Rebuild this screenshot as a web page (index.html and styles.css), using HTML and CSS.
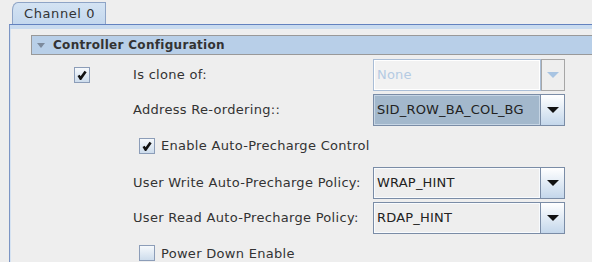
FILE: index.html
```html
<!DOCTYPE html>
<html lang="en">
<head>
    <meta charset="UTF-8">
    <meta name="viewport" content="width=device-width, initial-scale=1.0">
    <title>Channel 0</title>
    <link rel="stylesheet" href="styles.css">
</head>
<body>

    <div class="tabs">
        <!-- Pestañas -->
        <div class="tab-strip">
            <div class="tab">Channel 0</div>
        </div>

        <div class="tab-body">
            <div class="section-head">
                <span class="caret"></span>
                <span>Controller Configuration</span>
            </div>

            <div class="form">
                <div class="row">
                    <span class="check-cell"><span class="checkbox checked"></span></span>
                    <label class="label">Is clone of:</label>
                    <div class="combo disabled">
                        <span class="combo-value">None</span>
                        <span class="combo-button"><span class="arrow"></span></span>
                    </div>
                </div>

                <div class="row">
                    <span class="check-cell"></span>
                    <label class="label">Address Re-ordering::</label>
                    <div class="combo focused">
                        <span class="combo-value">SID_ROW_BA_COL_BG</span>
                        <span class="combo-button"><span class="arrow"></span></span>
                    </div>
                </div>

                <div class="row check-row">
                    <span class="checkbox checked"></span>
                    <label class="check-label">Enable Auto-Precharge Control</label>
                </div>

                <div class="row">
                    <span class="check-cell"></span>
                    <label class="label">User Write Auto-Precharge Policy:</label>
                    <div class="combo">
                        <span class="combo-value">WRAP_HINT</span>
                        <span class="combo-button"><span class="arrow"></span></span>
                    </div>
                </div>

                <div class="row">
                    <span class="check-cell"></span>
                    <label class="label">User Read Auto-Precharge Policy:</label>
                    <div class="combo">
                        <span class="combo-value">RDAP_HINT</span>
                        <span class="combo-button"><span class="arrow"></span></span>
                    </div>
                </div>

                <div class="row check-row last">
                    <span class="checkbox"></span>
                    <label class="check-label">Power Down Enable</label>
                </div>
            </div>
        </div>
    </div>

</body>
</html>
```

FILE: styles.css
```css
body {
    margin: 0;
    background-color: #eeeeee;
    font-family: "DejaVu Sans", sans-serif;
    font-size: 13px;
    letter-spacing: 0.3px;
    color: #333333;
    overflow: hidden;
}
.tabs {
    padding-left: 9px;
}
.tab-strip {
    display: flex;
    padding-top: 2px;
    padding-left: 3px;
    height: 22px;
}
.tab {
    width: 81px;
    height: 21px;
    padding-left: 11px;
    line-height: 21px;
    letter-spacing: 0.6px;
    border: 1px solid #8ea4c6;
    border-bottom: none;
    border-top-left-radius: 6px 8px;
    background: linear-gradient(#d4e3f3, #c4d8ee);
    color: #333333;
}
.tab-body {
    border-top: 1px solid #6382bf;
    border-left: 1px solid #7c95c4;
    box-shadow: inset 0 4px 0 #c9dbef, inset 1px 0 0 #d6e3f2;
    padding-top: 10px;
    height: 240px;
}
.section-head {
    display: flex;
    align-items: center;
    gap: 8px;
    margin-left: 21px;
    height: 18px;
    padding-left: 5px;
    border: 1px solid #999999;
    border-right: none;
    background-color: #b8cfe8;
    font-weight: bold;
    font-size: 12px;
    letter-spacing: 0.3px;
    color: #333333;
}
.caret {
    width: 0;
    height: 0;
    border-left: 4px solid transparent;
    border-right: 4px solid transparent;
    border-top: 5px solid #7c8a9c;
}
.form {
    padding-top: 2px;
    padding-left: 64px;
}
.row {
    display: flex;
    align-items: center;
    height: 35px;
}
.row.check-row {
    height: 37px;
    padding-left: 65px;
    padding-bottom: 1px;
}
.row.last {
    height: 28px;
    padding-bottom: 0;
    padding-top: 4px;
}
.check-cell {
    width: 59px;
    display: flex;
}
.label {
    width: 240px;
}
.check-label {
    margin-left: 6px;
}
.checkbox {
    width: 14px;
    height: 14px;
    border: 1px solid #8c9db8;
    background: linear-gradient(#f6f9fc, #cddcec);
    display: inline-block;
    position: relative;
}
.checkbox.checked::after {
    content: "";
    position: absolute;
    left: 2px;
    top: 2px;
    width: 10px;
    height: 10px;
    background: no-repeat center / 10px 10px url("data:image/svg+xml;utf8,<svg xmlns='http://www.w3.org/2000/svg' viewBox='0 0 10 10'><path d='M1.6 5.4 L3.6 8.6 L8.6 1.4' fill='none' stroke='%23111' stroke-width='2.6'/></svg>");
}
.combo {
    display: flex;
    width: 192px;
    height: 32px;
    letter-spacing: 0.2px;
}
.combo-value {
    flex: 1;
    display: flex;
    align-items: center;
    padding-left: 3px;
    border: 1px solid #7a8ca6;
    box-shadow: inset 0 0 0 1px #f8fbfe;
    background-color: #eeeeee;
    color: #222222;
}
.combo-button {
    width: 23px;
    display: flex;
    align-items: center;
    justify-content: center;
    border: 1px solid #7a8ca6;
    border-left: none;
    background: linear-gradient(#ffffff, #c4d7eb);
}
.arrow {
    width: 0;
    height: 0;
    border-left: 6px solid transparent;
    border-right: 6px solid transparent;
    border-top: 6px solid #111111;
}
.combo.focused .combo-value {
    background-color: #a3b8cc;
    box-shadow: inset 0 0 0 1px #c6d5e4;
}
.combo.disabled .combo-value {
    border-color: #a9bdd6;
    background-color: #f2f2f2;
    box-shadow: inset 0 0 0 1px #ffffff;
    color: #b5cbe3;
}
.combo.disabled .combo-button {
    border-color: #a6a6a6;
    border-left: 1px solid #a6a6a6;
    background: #eeeeee;
    width: 22px;
}
.combo.disabled .arrow {
    border-top-color: #a8c4e2;
}
```
